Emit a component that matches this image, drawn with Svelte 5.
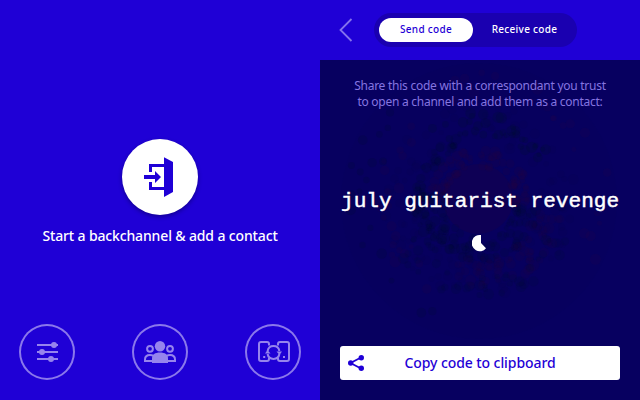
<script>
  let seed = 17;
  function rnd() {
    seed = (seed * 16807) % 2147483647;
    return seed / 2147483647;
  }
  // count, inner radius, outer radius, start and end angle, colour, opacity
  const rings = [
    [120, 58, 96, 0, 360, '#0a0044', 0.08],
    [70, 34, 52, 180, 370, '#2c003c', 0.14],
    [90, 36, 60, 0, 190, '#000c30', 0.16],
    [55, 55, 68, 130, 250, '#000c30', 0.16],
    [36, 66, 92, 235, 325, '#000c34', 0.22],
    [60, 56, 86, 10, 110, '#26003c', 0.12],
    [22, 82, 105, 95, 235, '#2c0040', 0.17],
    [40, 76, 98, 20, 150, '#000c34', 0.17],
    [18, 104, 134, 110, 230, '#000c34', 0.2],
    [24, 100, 132, 250, 390, '#2c0040', 0.15]
  ];
  const dots = rings.flatMap(([n, r0, r1, a0, a1, fill, opacity]) =>
    Array.from({ length: n }, () => {
      const r = r0 + rnd() * (r1 - r0);
      const a = ((a0 + rnd() * (a1 - a0)) * Math.PI) / 180;
      return { x: 160 + r * Math.cos(a), y: 141 + r * Math.sin(a), r: 2.4 + rnd() * 3.2, fill, opacity };
    })
  );
</script>

<div class="screen">
  <section class="home">
    <button class="start" aria-label="Start">
      <svg width="76" height="76" viewBox="0 0 76 76" fill="#1f00d6">
        <path d="M42 18.2 51 23v30l-9 5z" />
        <path d="M27 33v-8h15v3H30v5zM27 43v8h15v-3H30v-5z" />
        <path d="M22 36h11v-4l6 6-6 6v-4H22z" />
      </svg>
    </button>
    <p class="caption">Start a backchannel &amp; add a contact</p>
    <nav>
      <button class="round" aria-label="Settings">
        <svg width="56" height="56" viewBox="0 0 56 56" fill="#9684ed">
          <path d="M18 20h21v2H18zM18 27h21v2H18zM18 34h21v2H18z" />
          <circle cx="35" cy="21" r="3" /><circle cx="23" cy="28" r="3" /><circle cx="32" cy="35" r="3" />
        </svg>
      </button>
      <button class="round" aria-label="Contacts">
        <svg width="56" height="56" viewBox="0 0 56 56" fill="none" stroke="#9684ed" stroke-width="2">
          <circle cx="18" cy="24.8" r="2.9" /><circle cx="38" cy="24.8" r="2.9" />
          <path d="M20 37h-7v-1.5c0-3 2-4.5 5-4.5 1.500 0 2.500.3 3.500.8M36 37h7v-1.500c0-3-2-4.500-5-4.500-1.500 0-2.500.3-3.500.8" />
          <g fill="#9684ed" stroke="none"><circle cx="28" cy="22.300" r="5.200" />
            <path d="M20 39v-4.500c0-4 3-6 8-6s8 2 8 6V39z" /></g>
        </svg>
      </button>
      <button class="round" aria-label="Sync devices">
        <svg width="56" height="56" viewBox="0 0 56 56" fill="none" stroke="#9684ed" stroke-width="2">
          <path d="M24 21.500V20q0-2-2-2h-6q-2 0-2 2v15q0 2 2 2h6q2 0 2-2v-1M33 21.500V20q0-2 2-2h7q2 0 2 2v15q0 2-2 2h-7q-2 0-2-2v-1" />
          <path d="M22.600 27a6 6 0 0 1 11.800 0M34.400 30a6 6 0 0 1-11.800 0" />
          <path d="M20 29.500l2.500-3.500 3 3.500zM31.500 27.500l3 3.500 2.500-3.500z" fill="#9684ed" stroke="none" />
          <path d="M18.200 33h2M38 33h2" stroke-width="2" />
        </svg>
      </button>
    </nav>
  </section>

  <section class="share">
    <header>
      <svg class="back" width="14" height="24" viewBox="0 0 14 24" fill="none" stroke="#8572ed" stroke-width="1.800">
        <path d="M12.500 1 1.500 12l11 11" />
      </svg>
      <div class="tabs"><span class="tab active">Send code</span><span class="tab">Receive code</span></div>
    </header>
    <main>
      <svg class="rings" width="320" height="340" viewBox="0 0 320 340">
        <circle cx="159" cy="141" r="138" fill="#0b0057" opacity=".18" />
        <circle cx="158" cy="139" r="35" fill="#2a0038" opacity=".22" />
        {#each dots as d}
          <circle cx={d.x} cy={d.y} r={d.r} fill={d.fill} opacity={d.opacity} />
        {/each}
      </svg>
      <p class="intro">Share this code with a correspondant you trust<br />to open a channel and add them as a contact:</p>
      <p class="code">july guitarist revenge</p>
      <svg class="timer" width="16" height="18" viewBox="0 0 16 18">
        <path d="M9 1v8l5 5.200A8 8.200 0 1 1 9 1z" fill="#fff" />
      </svg>
      <button class="copy">
        <svg width="18" height="18" viewBox="0 0 18 18" fill="#1f00d6">
          <path d="M14 3.500 3.500 9 14 14.500" fill="none" stroke="#1f00d6" stroke-width="1.800" />
          <circle cx="14.300" cy="3.700" r="2.700" /><circle cx="3.700" cy="9" r="2.700" /><circle cx="14.300" cy="14.300" r="2.700" />
        </svg>
        <span>Copy code to clipboard</span>
      </button>
    </main>
  </section>
</div>

<style>
  .screen { display: flex; width: 640px; height: 400px; overflow: hidden; font-family: 'Noto Sans', sans-serif; }
  section { width: 320px; height: 400px; display: flex; flex-direction: column; }
  p { margin: 0; white-space: nowrap; }
  button { border: 0; padding: 0; margin: 0; font: inherit; display: flex; box-sizing: border-box; }
  svg { display: block; flex: none; }
  .home { background: #1f00d6; align-items: center; }
  .start { width: 76px; height: 76px; margin-top: 139px; border-radius: 50%; background: #fff; box-shadow: 0 2px 4px rgba(0, 0, 50, 0.4); }
  .caption { margin-top: 11px; height: 20px; line-height: 20px; font-size: 14px; font-weight: 500; letter-spacing: -0.14px; color: #fff; }
  nav { display: flex; width: 282px; margin: 78px 0 0; justify-content: space-between; }
  .round { width: 56px; height: 56px; border-radius: 50%; background: none; box-shadow: inset 0 0 0 2px #8b78eb; }
  header { height: 60px; background: #1f00d6; display: flex; align-items: center; padding-left: 19px; box-sizing: border-box; }
  .tabs { display: flex; align-items: center; height: 34px; margin-left: 21px; width: 203px; box-sizing: border-box; padding-left: 5px; border-radius: 17px; background: #1a00b0; }
  .tab { width: 103px; height: 24px; line-height: 23px; text-align: center; font-size: 10px; font-weight: 500; letter-spacing: 0.3px; color: #fff; }
  .tab.active { width: 94px; border-radius: 12px; background: #fff; color: #1f00d6; }
  main { height: 340px; background: #070060; display: grid; grid-template-rows: 50px 73px 36px 102px 1fr; justify-items: center; }
  .rings { grid-area: 1 / 1 / 6 / 2; }
  .intro { grid-area: 1 / 1; padding-top: 18px; font-size: 12px; line-height: 16px; letter-spacing: -0.26px; text-align: center; color: #8575e0; }
  .code { grid-area: 3 / 1; padding-top: 1px; font-family: 'Liberation Mono', monospace; font-size: 20px; line-height: 36px; color: #fff; -webkit-text-stroke: 0.45px #fff; transform: scaleX(1.053); }
  .timer { grid-area: 4 / 1; margin-top: 15px; }
  .copy { grid-area: 5 / 1; align-self: start; margin-top: 25px; width: 280px; height: 34px; border-radius: 3px; background: #fff; color: #1f00d6; align-items: center; padding-left: 7px; font-size: 14px; font-weight: 500; letter-spacing: -0.08px; }
  .copy span { width: 230px; text-align: center; line-height: 32px; white-space: nowrap; }
</style>
